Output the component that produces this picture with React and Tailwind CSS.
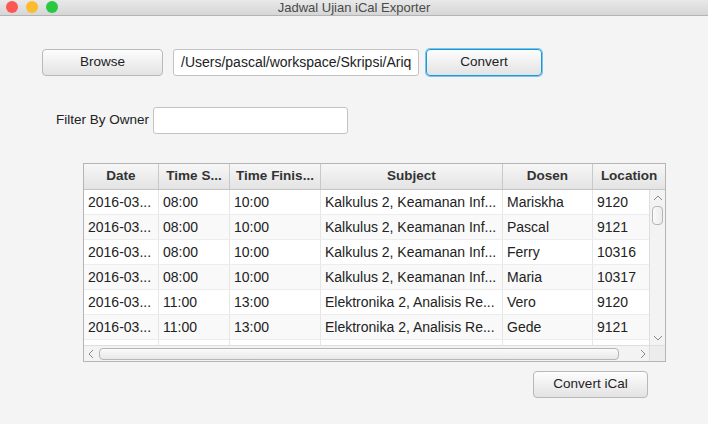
const rows = [
  ["2016-03...", "08:00", "10:00", "Kalkulus 2, Keamanan Inf...", "Mariskha", "9120"],
  ["2016-03...", "08:00", "10:00", "Kalkulus 2, Keamanan Inf...", "Pascal", "9121"],
  ["2016-03...", "08:00", "10:00", "Kalkulus 2, Keamanan Inf...", "Ferry", "10316"],
  ["2016-03...", "08:00", "10:00", "Kalkulus 2, Keamanan Inf...", "Maria", "10317"],
  ["2016-03...", "11:00", "13:00", "Elektronika 2, Analisis Re...", "Vero", "9120"],
  ["2016-03...", "11:00", "13:00", "Elektronika 2, Analisis Re...", "Gede", "9121"],
  ["", "", "", "", "", ""],
];

const headers = ["Date", "Time S...", "Time Finis...", "Subject", "Dosen", "Location"];
const widths = ["w-[75px]", "w-[71px]", "w-[91px]", "w-[182px]", "w-[90px]", "w-[73px]"];

const Chevron = ({ d }) => (
  <svg width="10" height="10" viewBox="0 0 10 10" className="block">
    <polyline points={d} fill="none" stroke="#8a8a8a" strokeWidth="1" />
  </svg>
);

const Button = ({ children, className = "", focused }) => (
  <button
    className={`h-[27px] rounded-[4px] border text-[13.5px] text-[#222] bg-gradient-to-b from-[#fdfdfd] to-[#e3e3e3] ${
      focused ? "border-[#1a9ad6] shadow-[0_0_0_1px_#7cc3ea]" : "border-[#b9b9b9]"
    } ${className}`}
  >
    {children}
  </button>
);

export default function App() {
  return (
    <div
      className="w-[708px] h-[424px] bg-[#f4f4f4] overflow-hidden text-[#222]"
      style={{ fontFamily: '"Liberation Sans", Arial, sans-serif' }}
    >
      {/* title bar */}
      <div className="relative h-[16px] bg-gradient-to-b from-[#e9e9e9] to-[#d6d6d6] border-b border-[#b4b4b4] flex items-center justify-center">
        <div className="absolute left-[6px] top-[1px] flex gap-[8px]">
          <span className="w-[12px] h-[12px] rounded-full bg-[#fc5753]" />
          <span className="w-[12px] h-[12px] rounded-full bg-[#fdbc2e]" />
          <span className="w-[12px] h-[12px] rounded-full bg-[#28c840]" />
        </div>
        <span className="text-[13px] leading-none text-[#4a4a4a]">Jadwal Ujian iCal Exporter</span>
      </div>

      {/* file row */}
      <div className="flex items-center pl-[42px] pt-[33px]">
        <Button className="w-[121px]">Browse</Button>
        <div className="ml-[10px] w-[246px] h-[27px] bg-white border border-[#c3c3c3] rounded-[3px] flex items-center pl-[7px] text-[14px] overflow-hidden whitespace-nowrap">
          /Users/pascal/workspace/Skripsi/Ariq
        </div>
        <Button className="ml-[7px] w-[116px]" focused>
          Convert
        </Button>
      </div>

      {/* filter row */}
      <div className="flex items-center pl-[56px] mt-[31px]">
        <span className="w-[94px] text-[13.5px] whitespace-nowrap">Filter By Owner</span>
        <div className="ml-[3px] w-[195px] h-[27px] bg-white border border-[#c3c3c3] rounded-[3px]" />
      </div>

      {/* table */}
      <div className="ml-[83px] mt-[29px] w-[583px] h-[199px] border border-[#b5b5b5] bg-white flex flex-col overflow-hidden">
        <div className="flex h-[26px] shrink-0 bg-gradient-to-b from-[#f7f7f7] to-[#e3e3e3] border-b border-[#c4c4c4]">
          {headers.map((h, i) => (
            <div
              key={h}
              className={`${widths[i]} shrink-0 flex items-center justify-center text-[13.5px] font-bold text-[#333] border-r border-[#c9c9c9] whitespace-nowrap`}
            >
              {h}
            </div>
          ))}
        </div>
        <div className="flex flex-1 min-h-0">
          <div className="flex-1 overflow-hidden">
            {rows.map((r, ri) => (
              <div
                key={ri}
                className={`flex h-[25px] border-b border-[#ededed] ${ri % 2 ? "bg-[#f9f9f9]" : "bg-white"}`}
              >
                {r.map((c, ci) => (
                  <div
                    key={ci}
                    className={`${widths[ci]} shrink-0 flex items-center pl-[4px] text-[14px] text-[#222] border-r border-[#e6e6e6] whitespace-nowrap overflow-hidden`}
                  >
                    {c}
                  </div>
                ))}
              </div>
            ))}
          </div>
          {/* vertical scrollbar */}
          <div className="w-[16px] shrink-0 bg-[#f3f3f3] border-l border-[#dedede] flex flex-col items-center">
            <div className="mt-[3px]">
              <Chevron d="1,7 5,3 9,7" />
            </div>
            <div className="mt-[3px] w-[11px] h-[19px] rounded-[4px] bg-gradient-to-r from-[#fafafa] to-[#ebebeb] border border-[#b5b5b5]" />
            <div className="flex-1" />
            <div className="mb-[2px]">
              <Chevron d="1,3 5,7 9,3" />
            </div>
          </div>
        </div>
        {/* horizontal scrollbar */}
        <div className="flex h-[16px] shrink-0 border-t border-[#dedede] bg-[#f3f3f3]">
          <div className="flex flex-1 items-center">
            <div className="ml-[2px]">
              <Chevron d="7,1 3,5 7,9" />
            </div>
            <div className="ml-[3px] w-[520px] h-[12px] rounded-[4px] bg-gradient-to-b from-[#fafafa] to-[#e8e8e8] border border-[#b5b5b5]" />
            <div className="ml-[19px]">
              <Chevron d="3,1 7,5 3,9" />
            </div>
          </div>
          <div className="w-[16px] shrink-0 bg-[#ececec] border-l border-[#dedede]" />
        </div>
      </div>

      <div className="ml-[533px] mt-[9px]">
        <Button className="w-[115px] h-[26px]">Convert iCal</Button>
      </div>
    </div>
  );
}
